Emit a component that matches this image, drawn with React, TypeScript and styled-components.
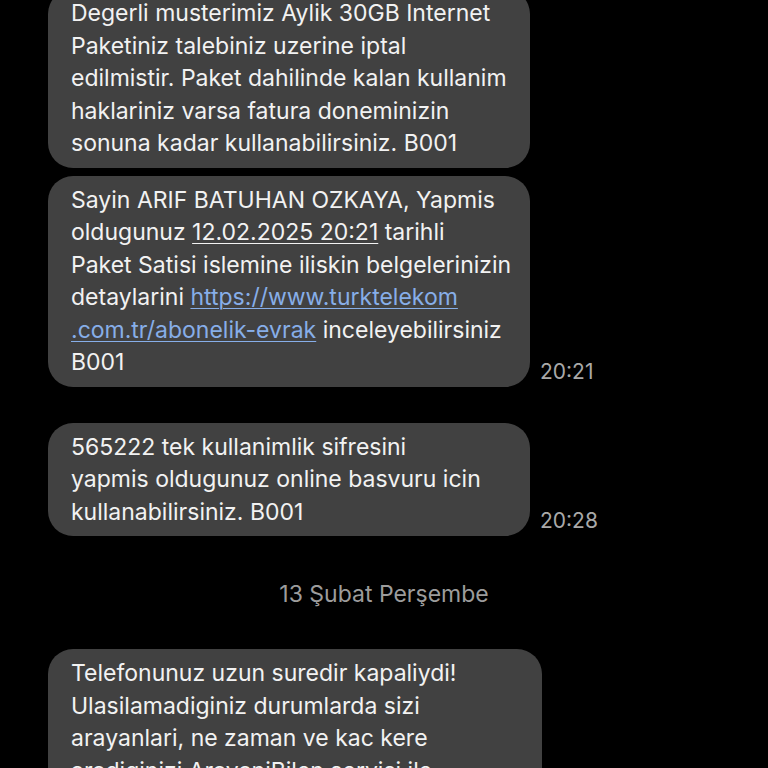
import React from "react";
import styled, { createGlobalStyle } from "styled-components";

const GlobalStyle = createGlobalStyle`
  html, body {
    margin: 0;
    padding: 0;
    background: #000;
  }
  body {
    font-family: Inter, "Noto Sans", "DejaVu Sans", sans-serif;
    overflow: hidden;
  }
`;

const Screen = styled.div`
  width: 768px;
  height: 768px;
  overflow: hidden;
  background: #000;
`;

const Thread = styled.div`
  display: flex;
  flex-direction: column;
  padding: 0 48px;
  margin-top: -11px;
`;

const Row = styled.div<{ $gap: number }>`
  display: flex;
  align-items: flex-end;
  gap: 10px;
  margin-bottom: ${(p) => p.$gap}px;
`;

const Bubble = styled.div<{ $width: number }>`
  width: ${(p) => p.$width}px;
  box-sizing: border-box;
  background: #414141;
  border-radius: 25px;
  padding: 8px 20px 8px 23px;
  color: #f2f2f2;
  font-size: 23px;
  line-height: 32.5px;
  letter-spacing: 0;
  white-space: nowrap;
  overflow: hidden;
`;

const Time = styled.span`
  color: #a9a9a9;
  font-size: 21px;
  line-height: 24px;
  margin-bottom: 3px;
`;

const DateLabel = styled.div`
  text-align: center;
  color: #9c9c9c;
  font-size: 23px;
  line-height: 32px;
  margin: 42px 0 39px;
`;

const Underlined = styled.span`
  text-decoration: underline;
  text-underline-offset: 3px;
  text-decoration-thickness: 1px;
`;

const Link = styled.span`
  color: #87aee8;
  text-decoration: underline;
  text-underline-offset: 3px;
  text-decoration-thickness: 1px;
`;

const App: React.FC = () => {
  return (
    <>
      <GlobalStyle />
      <Screen>
        <Thread>
          <Row $gap={8}>
            <Bubble $width={482}>
              Degerli musterimiz Aylik 30GB Internet
              <br />
              Paketiniz talebiniz uzerine iptal
              <br />
              edilmistir. Paket dahilinde kalan kullanim
              <br />
              haklariniz varsa fatura doneminizin
              <br />
              sonuna kadar kullanabilirsiniz. B001
            </Bubble>
          </Row>
          <Row $gap={36}>
            <Bubble $width={482}>
              Sayin ARIF BATUHAN OZKAYA, Yapmis
              <br />
              oldugunuz <Underlined>12.02.2025 20:21</Underlined> tarihli
              <br />
              Paket Satisi islemine iliskin belgelerinizin
              <br />
              detaylarini <Link>https://www.turktelekom</Link>
              <br />
              <Link>.com.tr/abonelik-evrak</Link> inceleyebilirsiniz
              <br />
              B001
            </Bubble>
            <Time>20:21</Time>
          </Row>
          <Row $gap={0}>
            <Bubble $width={482}>
              565222 tek kullanimlik sifresini
              <br />
              yapmis oldugunuz online basvuru icin
              <br />
              kullanabilirsiniz. B001
            </Bubble>
            <Time>20:28</Time>
          </Row>
          <DateLabel>13 Şubat Perşembe</DateLabel>
          <Row $gap={0}>
            <Bubble $width={494}>
              Telefonunuz uzun suredir kapaliydi!
              <br />
              Ulasilamadiginiz durumlarda sizi
              <br />
              arayanlari, ne zaman ve kac kere
              <br />
              aradiginizi ArayaniBilen servisi ile
            </Bubble>
          </Row>
        </Thread>
      </Screen>
    </>
  );
};

export default App;
